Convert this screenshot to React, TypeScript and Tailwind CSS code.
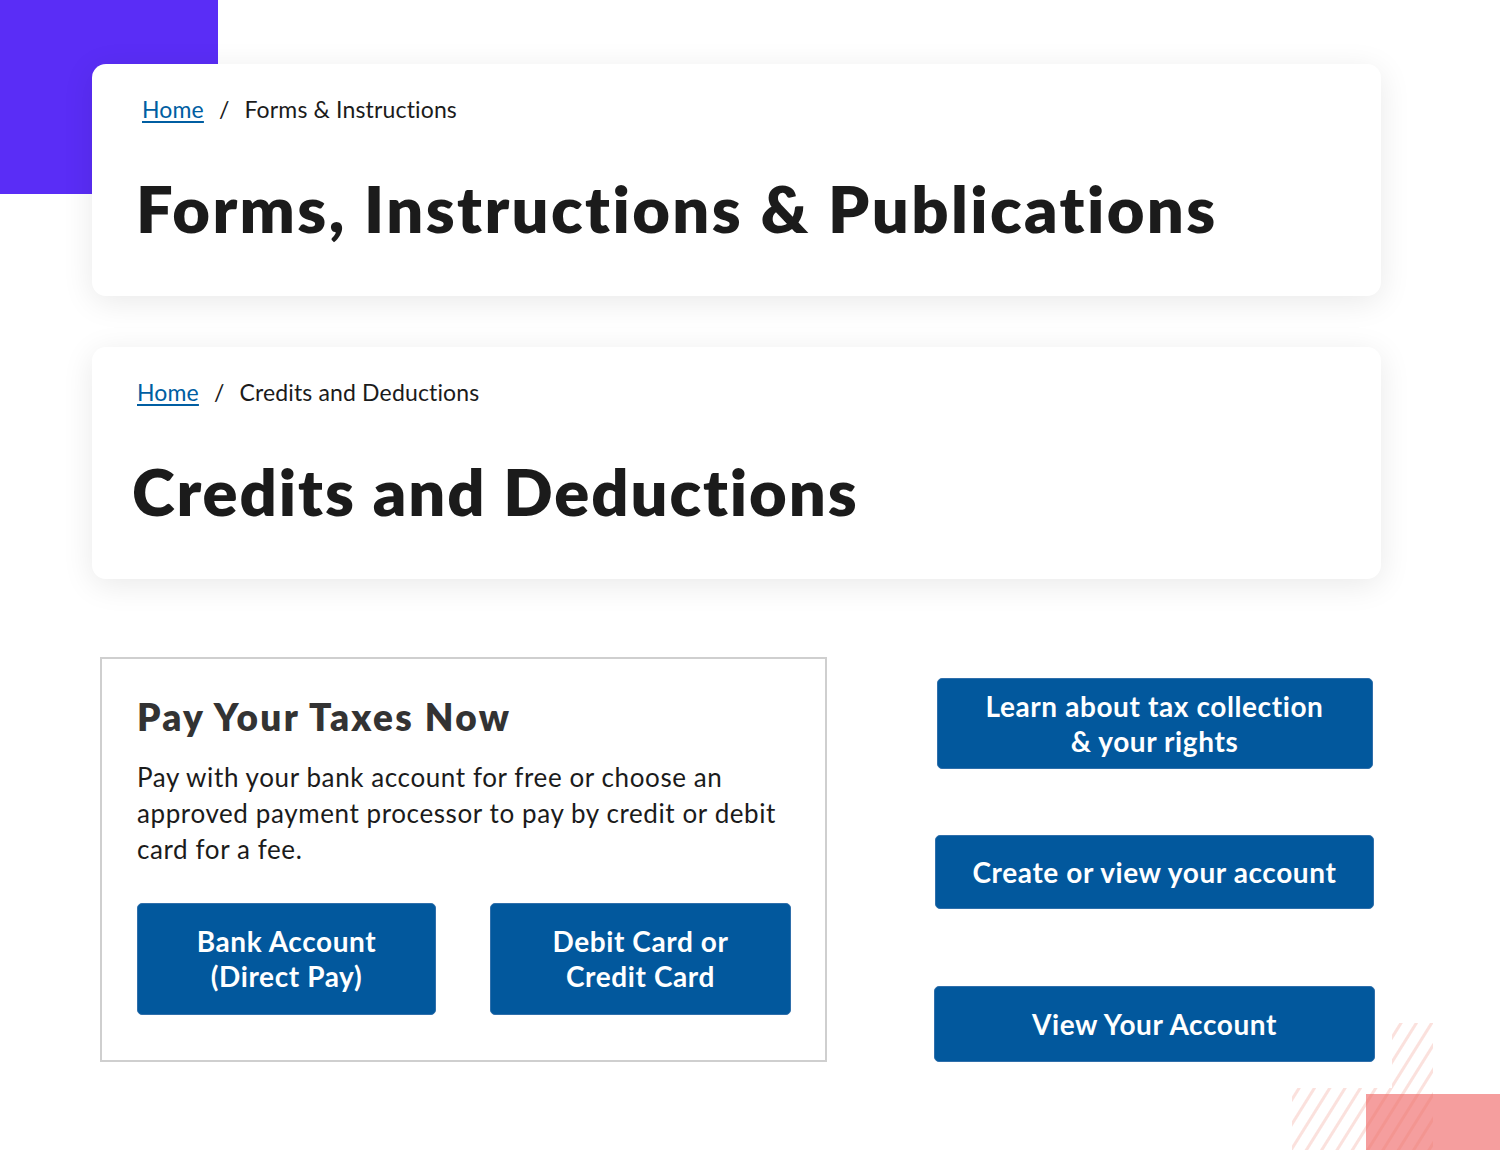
import React from 'react';

interface Crumb {
  current: string;
}

const Breadcrumb: React.FC<Crumb> = ({ current }) => (
  <nav className="flex items-center text-[23px] leading-none tracking-[0.15px] text-[#1b1b1b]">
    <a href="#" className="text-[#005ea2] underline underline-offset-[3px] decoration-[1.5px]">Home</a>
    <span className="mx-[15px]">/</span>
    <span>{current}</span>
  </nav>
);

const HeaderCard: React.FC<{ crumb: string; title: string; crumbPad: string; titleCls: string }> = ({ crumb, title, crumbPad, titleCls }) => (
  <section className="w-[1289px] h-[232px] bg-white rounded-[14px] shadow-[0_6px_32px_rgba(0,0,0,0.09)] flex flex-col">
    <div className={`pt-[34px] ${crumbPad}`}>
      <Breadcrumb current={crumb} />
    </div>
    <h1 className={`mt-[55px] text-[65px] leading-none font-extrabold text-[#1b1b1b] ${titleCls}`}>{title}</h1>
  </section>
);

const BlueButton: React.FC<{ children: React.ReactNode; className: string }> = ({ children, className }) => (
  <a
    href="#"
    className={`flex items-center justify-center text-center bg-[#02589d] border border-[#2f6fab] rounded-[5px] text-white font-bold text-[28px] leading-[35px] tracking-[0.6px] ${className}`}
  >
    {children}
  </a>
);

const Hatch: React.FC = () => (
  <svg className="absolute left-[1292px] top-[1023px]" width="141" height="127" viewBox="0 0 141 127">
    <defs>
      <pattern id="stripes" width="13" height="13" patternUnits="userSpaceOnUse" patternTransform="rotate(32)">
        <rect x="0" y="0" width="3" height="13" fill="rgba(238,120,100,0.22)" />
      </pattern>
    </defs>
    <polygon points="100,0 141,0 141,127 0,127 0,65 100,65" fill="url(#stripes)" />
  </svg>
);

export default function App() {
  return (
    <div className="relative w-[1500px] h-[1150px] overflow-hidden bg-white font-['Lato','Noto_Sans',sans-serif]">
      <div className="absolute left-0 top-0 w-[218px] h-[194px] bg-[#5a2df6]" />
      <div className="absolute left-[1366px] top-[1094px] w-[134px] h-[56px] bg-[#f59e9e]" />
      <Hatch />

      <main className="relative flex flex-col pl-[92px] pt-[64px]">
        <HeaderCard
          crumb="Forms & Instructions"
          title="Forms, Instructions & Publications"
          crumbPad="pl-[50px]"
          titleCls="pl-[44px] tracking-[2.4px]"
        />
        <div className="mt-[51px]">
          <HeaderCard
            crumb="Credits and Deductions"
            title="Credits and Deductions"
            crumbPad="pl-[45px]"
            titleCls="pl-[40px] tracking-[1.9px]"
          />
        </div>

        <div className="flex mt-[78px] ml-[8px]">
          <div className="w-[727px] h-[405px] border-2 border-[#cfcfcf] pl-[35px] pr-[20px] pt-[36px]">
            <h2 className="text-[37px] leading-[44px] font-extrabold text-[#333333] tracking-[2.3px]">Pay Your Taxes Now</h2>
            <p className="mt-[20px] text-[26px] leading-[36px] text-[#1b1b1b] tracking-[0.6px]">
              Pay with your bank account for free or choose an approved payment processor to pay by credit or debit card for a fee.
            </p>
            <div className="flex gap-[54px] mt-[36px]">
              <BlueButton className="w-[299px] h-[112px]">Bank Account<br />(Direct Pay)</BlueButton>
              <BlueButton className="w-[301px] h-[112px]">Debit Card or<br />Credit Card</BlueButton>
            </div>
          </div>

          <div className="flex flex-col items-center ml-[107px] w-[441px]">
            <BlueButton className="mt-[21px] w-[436px] h-[91px]">Learn about tax collection<br />&amp; your rights</BlueButton>
            <BlueButton className="mt-[66px] w-[439px] h-[74px]">Create or view your account</BlueButton>
            <BlueButton className="mt-[77px] w-[441px] h-[76px]">View Your Account</BlueButton>
          </div>
        </div>
      </main>
    </div>
  );
}
